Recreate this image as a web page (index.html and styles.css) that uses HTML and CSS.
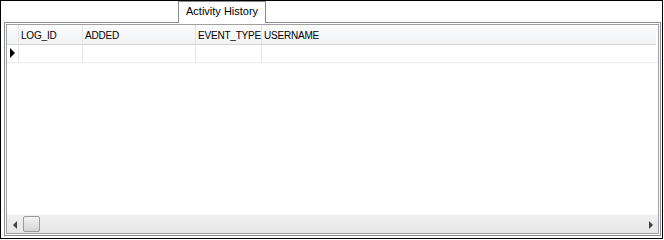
FILE: index.html
```html
<!DOCTYPE html>
<html lang="en">

<head>
    <meta charset="UTF-8">
    <title>Activity History</title>
    <link rel="stylesheet" href="styles.css">
</head>

<body>
    <div class="window">
        <div class="tab-strip">
            <div class="tab">Activity History</div>
        </div>

        <div class="tab-page">
            <div class="grid">
                <!-- Column headers -->
                <div class="grid-row grid-head">
                    <div class="cell row-header"></div>
                    <div class="cell col-log">LOG_ID</div>
                    <div class="cell col-added">ADDED</div>
                    <div class="cell col-event">EVENT_TYPE</div>
                    <div class="cell col-user">USERNAME</div>
                </div>

                <!-- New row -->
                <div class="grid-row">
                    <div class="cell row-header"><span class="row-arrow"></span></div>
                    <div class="cell col-log"></div>
                    <div class="cell col-added"></div>
                    <div class="cell col-event"></div>
                    <div class="cell col-user"></div>
                </div>

                <div class="grid-empty"></div>

                <div class="hscroll">
                    <span class="scroll-btn scroll-left"></span>
                    <div class="scroll-track">
                        <span class="scroll-thumb"></span>
                    </div>
                    <span class="scroll-btn scroll-right"></span>
                </div>
            </div>
        </div>
    </div>
</body>

</html>
```

FILE: styles.css
```css
body {
    margin: 0;
    background: #ffffff;
    font-family: "Liberation Sans", Arial, sans-serif;
    color: #000;
}

.window {
    width: 661px;
    height: 237px;
    border: 1px solid #000;
    display: flex;
    flex-direction: column;
    background: #fff;
}

.tab-strip {
    height: 21px;
    display: flex;
    padding-left: 177px;
}

.tab {
    box-sizing: border-box;
    height: 22px;
    padding: 3px 7px 0 7px;
    border: 1px solid #898c95;
    border-bottom: none;
    background: #fff;
    font-size: 11px;
    position: relative;
    z-index: 1;
}

.tab-page {
    flex: 1;
    margin: 0 1px 2px 3px;
    border: 1px solid #898c95;
    padding: 1px;
    display: flex;
}

.grid {
    flex: 1;
    border: 1px solid #a0a0a0;
    display: flex;
    flex-direction: column;
    background: #fff;
}

.grid-row {
    display: flex;
    height: 17px;
    border-bottom: 1px solid #ececec;
}

.grid-head {
    height: 19px;
    background: linear-gradient(#fdfdfd, #f1f2f4);
    border-bottom: 1px solid #d5d5d5;
    margin-right: 2px;
}

.grid-head .cell {
    padding-top: 4px;
}

.cell {
    box-sizing: border-box;
    border-right: 1px solid #e4e4e4;
    font-size: 10px;
    letter-spacing: -0.2px;
    line-height: 14px;
    padding-left: 2px;
    white-space: nowrap;
    overflow: hidden;
}

.row-header {
    width: 12px;
    position: relative;
}

.col-log {
    width: 64px;
}

.col-added {
    width: 113px;
}

.col-event {
    width: 66px;
}

.col-user {
    flex: 1;
    border-right: none;
}

.row-arrow {
    position: absolute;
    left: 3px;
    top: 3px;
    width: 0;
    height: 0;
    border-top: 5px solid transparent;
    border-bottom: 5px solid transparent;
    border-left: 5px solid #000;
}

.grid-empty {
    flex: 1;
}

.hscroll {
    height: 18px;
    display: flex;
    align-items: center;
    background: linear-gradient(#f0f0f0, #e6e6e6);
    border-top: 1px solid #f6f6f6;
}

.scroll-btn {
    width: 16px;
    height: 18px;
    position: relative;
}

.scroll-left::after,
.scroll-right::after {
    content: "";
    position: absolute;
    top: 6px;
    width: 0;
    height: 0;
    border-top: 4px solid transparent;
    border-bottom: 4px solid transparent;
}

.scroll-left::after {
    left: 6px;
    border-right: 4px solid #404040;
}

.scroll-right::after {
    left: 7px;
    border-left: 4px solid #404040;
}

.scroll-track {
    flex: 1;
    height: 18px;
    display: flex;
    align-items: center;
}

.scroll-thumb {
    box-sizing: border-box;
    width: 17px;
    height: 16px;
    border: 1px solid #9a9a9a;
    border-radius: 2px;
    background: linear-gradient(#f4f4f4, #d4d4d4);
}
```
